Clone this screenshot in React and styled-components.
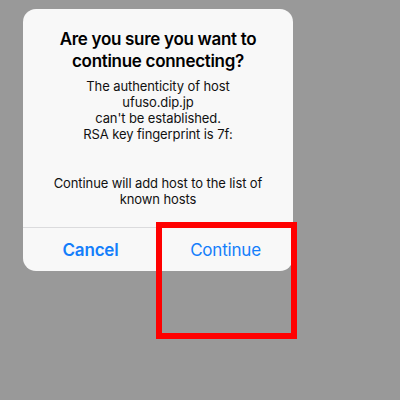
import styled, { createGlobalStyle } from "styled-components";

export default function App() {
    return (
        <>
            <GlobalStyle />
            <Page>
                <Dialog>
                    <Content>
                        <Title>Are you sure you want to continue connecting?</Title>
                        <Message>
                            The authenticity of host
                            <br />
                            ufuso.dip.jp
                            <br />
                            can't be established.
                            <br />
                            RSA key fingerprint is 7f:
                        </Message>
                        <Message $spaced>
                            Continue will add host to the list of known hosts
                        </Message>
                    </Content>
                    <Actions>
                        <ActionButton $bold>Cancel</ActionButton>
                        <ActionButton>Continue</ActionButton>
                    </Actions>
                </Dialog>
                <Highlight />
            </Page>
        </>
    );
}

const GlobalStyle = createGlobalStyle`
    html, body {
        margin: 0;
        padding: 0;
        background: #999999;
    }
`;

const Page = styled.div`
    position: relative;
    width: 400px;
    height: 400px;
    padding: 9px 0 0 23px;
    box-sizing: border-box;
    background: #999999;
    font-family: Inter, "Noto Sans", sans-serif;
`;

const Dialog = styled.div`
    width: 270px;
    background: #f8f8f8;
    border-radius: 13px;
    overflow: hidden;
    display: flex;
    flex-direction: column;
`;

const Content = styled.div`
    padding: 19px 16px 20px;
    text-align: center;
`;

const Title = styled.div`
    font-size: 17px;
    font-weight: 600;
    line-height: 22px;
    letter-spacing: -0.3px;
    color: #000;
    padding: 0 12px;
    margin-bottom: 6px;
`;

const Message = styled.div`
    font-size: 13px;
    line-height: 16px;
    letter-spacing: -0.1px;
    color: #111;
    margin-top: ${(p) => (p.$spaced ? "33px" : "0")};
`;

const Actions = styled.div`
    display: grid;
    grid-template-columns: 1fr 1fr;
    border-top: 1px solid #dbdbdd;
    height: 43px;
`;

const ActionButton = styled.div`
    display: flex;
    align-items: center;
    justify-content: center;
    font-size: 17px;
    font-weight: ${(p) => (p.$bold ? 600 : 400)};
    letter-spacing: -0.2px;
    color: #147efb;
`;

const Highlight = styled.div`
    position: absolute;
    left: 156px;
    top: 222px;
    width: 141px;
    height: 117px;
    box-sizing: border-box;
    border: 6px solid #ff0000;
`;
